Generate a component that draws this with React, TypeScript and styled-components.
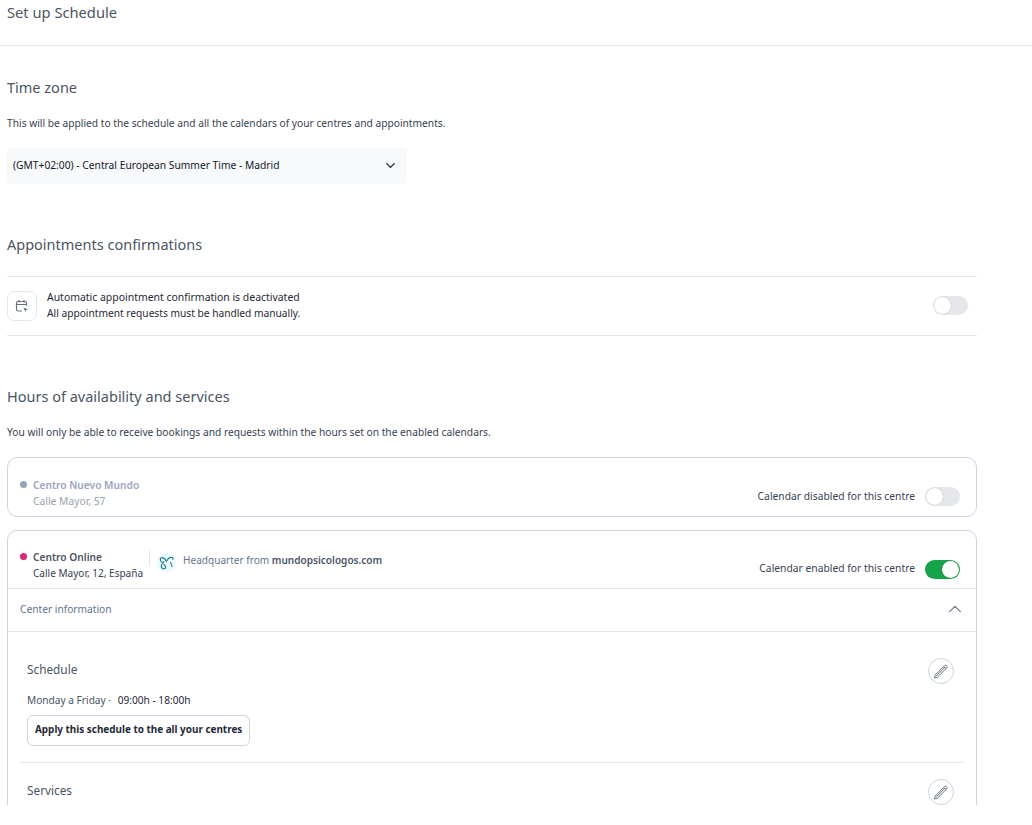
import React from 'react';
import styled, { createGlobalStyle } from 'styled-components';
import { ChevronDown, ChevronUp } from 'lucide-react';

const GlobalStyle = createGlobalStyle`
  html, body {
    margin: 0;
    padding: 0;
    background: #fff;
    font-family: "Noto Sans", "Open Sans", sans-serif;
    color: #1f2937;
  }
`;

const Page = styled.div`
  width: 1032px;
  height: 805px;
  overflow: hidden;
`;

const Header = styled.header`
  height: 46px;
  padding: 3px 7px 0;
  box-sizing: border-box;
  border-bottom: 1px solid #e5e7ef;
  font-size: 14.7px;
  line-height: 18px;
  color: #4b5563;
`;

const Content = styled.main`
  width: 970px;
  padding: 31px 0 0 7px;
`;

const Section = styled.section`
  margin-bottom: 50px;
`;

const SectionTitle = styled.h2`
  margin: 0;
  font-size: 14.5px;
  font-weight: 400;
  line-height: 20px;
  color: #4b5563;
`;

const Hint = styled.p`
  margin: 19px 0 0;
  font-size: 10.22px;
  line-height: 14px;
  color: #374151;
`;

const Select = styled.div`
  margin-top: 18px;
  width: 400px;
  height: 36px;
  padding: 0 9px 2px 6px;
  box-sizing: border-box;
  display: flex;
  align-items: center;
  justify-content: space-between;
  background: #f8f9fb;
  border-radius: 2px;
  font-size: 10.25px;
  color: #111827;
`;

const ConfirmRow = styled.div`
  margin-top: 22px;
  height: 60px;
  padding: 0 9px 2px 0;
  box-sizing: border-box;
  display: flex;
  align-items: center;
  border-top: 1px solid #e5e7eb;
  border-bottom: 1px solid #e5e7eb;
`;

const IconBox = styled.div`
  width: 30px;
  height: 30px;
  margin: 2px 10px 0 0;
  box-sizing: border-box;
  display: flex;
  align-items: center;
  justify-content: center;
  border: 1px solid #e5e7ef;
  border-radius: 7px;
`;

const ConfirmText = styled.div`
  flex: 1;
  line-height: 16px;
  color: #1f2937;
`;

const ConfirmTitle = styled.div`
  font-size: 10.45px;
`;

const ConfirmBody = styled.div`
  font-size: 10.2px;
`;

const Toggle = styled.span<{ $on?: boolean }>`
  position: relative;
  display: block;
  flex: none;
  width: 35px;
  height: 19px;
  border-radius: 10px;
  background: ${(p) => (p.$on ? '#16a34a' : '#e5e7eb')};

  &::after {
    content: '';
    position: absolute;
    top: 1px;
    left: ${(p) => (p.$on ? '17px' : '1px')};
    width: 17px;
    height: 17px;
    border-radius: 50%;
    background: #fff;
    box-shadow: 0 0 1px rgba(0, 0, 0, 0.3);
  }
`;

const Card = styled.div`
  margin-top: 13px;
  border: 1px solid #cbd5e1;
  border-radius: 10px;
`;

const CardList = styled.div`
  margin-top: 18px;
`;

const CardHead = styled.div<{ $open?: boolean }>`
  height: 58px;
  padding: ${(p) => (p.$open ? '18px' : '19px')} 16px 0 12px;
  box-sizing: border-box;
  display: flex;
  ${(p) => (p.$open ? 'border-bottom: 1px solid #e2e8f0;' : '')}
`;

const Dot = styled.span<{ $color: string }>`
  flex: none;
  width: 7px;
  height: 7px;
  margin: 4px 6px 0 0;
  border-radius: 50%;
  background: ${(p) => p.$color};
`;

const CentreName = styled.div<{ $muted?: boolean }>`
  font-size: 10.2px;
  font-weight: 600;
  line-height: 16px;
  color: ${(p) => (p.$muted ? '#9ca3bf' : '#4b5563')};
`;

const CentreAddress = styled.div<{ $muted?: boolean }>`
  font-size: ${(p) => (p.$muted ? '10.3px' : '10.05px')};
  line-height: 16px;
  color: ${(p) => (p.$muted ? '#9ca3af' : '#374151')};
`;

const Separator = styled.span`
  flex: none;
  width: 1px;
  height: 16px;
  margin: 1px 7px 0 6px;
  background: #e2e8f0;
`;

const Headquarter = styled.div`
  display: flex;
  align-items: flex-start;
  margin-top: 4px;
  font-size: 10.05px;
  line-height: 14px;
  color: #64748b;

  b {
    font-weight: 600;
    color: #4b5563;
  }
`;

const Butterfly = styled.span`
  display: flex;
  align-items: center;
  justify-content: center;
  width: 19px;
  height: 19px;
  margin-right: 7px;
  border-radius: 50%;
  background: #e9f9fc;
`;

const CalendarStatus = styled.div<{ $bottom: number }>`
  margin-left: auto;
  margin-bottom: ${(p) => p.$bottom}px;
  align-self: flex-end;
  display: flex;
  align-items: center;
  gap: 10px;
  font-size: 10.3px;
  color: #374151;
`;

const StatusLabel = styled.span<{ $lift: number }>`
  padding-bottom: ${(p) => p.$lift}px;
`;

const InfoBar = styled.div`
  height: 43px;
  padding: 0 10px 2px 12px;
  box-sizing: border-box;
  display: flex;
  align-items: center;
  justify-content: space-between;
  border-bottom: 1px solid #e2e8f0;
  font-size: 10.2px;
  color: #64748b;
`;

const Block = styled.div<{ $last?: boolean }>`
  margin: 0 13px 0 12px;
  padding: ${(p) => (p.$last ? '16px' : '26px')} 9px 16px 7px;
  ${(p) => (p.$last ? '' : 'border-bottom: 1px solid #e2e8f0;')}
`;

const BlockHead = styled.div`
  display: flex;
  align-items: center;
  justify-content: space-between;
  font-size: 11.8px;
  color: #4b5563;
`;

const BlockTitle = styled.span`
  padding-bottom: 4px;
`;

const EditButton = styled.span`
  display: flex;
  align-items: center;
  justify-content: center;
  width: 26px;
  height: 26px;
  box-sizing: border-box;
  border: 1px solid #cbd5e1;
  border-radius: 50%;
`;

const Hours = styled.div`
  margin-top: 8px;
  font-size: 10.15px;
  line-height: 16px;
  color: #4b5563;

  span {
    margin-left: 4px;
    color: #1f2937;
  }
`;

const ApplyButton = styled.div`
  display: block;
  width: fit-content;
  margin-top: 7px;
  padding: 0 7px 0 7px;
  height: 31px;
  line-height: 26px;
  box-sizing: border-box;
  border: 1px solid #cbd5e1;
  border-radius: 6px;
  font-size: 9.92px;
  font-weight: 700;
  color: #1f2937;
`;

const CalendarClick = () => (
  <svg width="16" height="16" viewBox="0 0 16 16" fill="none" stroke="#6b7280" strokeWidth="1.2">
    <path d="M8 13H4a1.5 1.5 0 0 1-1.5-1.5V5A1.5 1.5 0 0 1 4 3.5h7A1.5 1.5 0 0 1 12.5 5v2.5" />
    <path d="M2.5 6.5h10M5 2v2.5M10 2v2.5" />
    <path d="M9.5 9.5l4.5 1.8-2 .7-.7 2z" fill="#6b7280" stroke="none" />
    <path d="M14.5 8.5l.6-.6M12.5 8v-.8" strokeWidth="0.8" />
  </svg>
);

const ButterflyLogo = () => (
  <svg width="16" height="14" viewBox="0 0 16 14" fill="none" stroke="#2a7d8e" strokeWidth="1.2">
    <path d="M7.5 5.5C6 2.8 3.8 1.2 2.2 1.8 0.8 2.4 1.2 4.4 2.4 5.8L6 9.6c.9 1 .8 2.6-.4 3-1.6.5-3.4-.6-3.4-2.8 0-1.6 1.4-3.2 3-4.4" />
    <path d="M7.5 5.5c1-2.2 3-4.1 5-4.1 1.3 0 1.7 1 1.2 2.4M11.3 6c1 1.5 1.6 3 1.7 5" />
  </svg>
);

const Pencil = () => (
  <svg width="16" height="16" viewBox="0 0 16 16" fill="none" stroke="#5b6472" strokeWidth="0.9">
    <path d="M1.5 15l.7-3L11.8 2.4a1 1 0 0 1 1.4 0l.8.8a1 1 0 0 1 0 1.4L4.4 14.2z" />
    <path d="M3.3 12.9l8.9-8.9M10.8 3.4l2.3 2.3" />
  </svg>
);

export default function App() {
  return (
    <Page>
      <GlobalStyle />
      <Header>Set up Schedule</Header>
      <Content>
        <Section>
          <SectionTitle>Time zone</SectionTitle>
          <Hint>This will be applied to the schedule and all the calendars of your centres and appointments.</Hint>
          <Select>
            (GMT+02:00) - Central European Summer Time - Madrid
            <ChevronDown size={15} strokeWidth={2.2} color="#1f2937" />
          </Select>
        </Section>
        <Section>
          <SectionTitle>Appointments confirmations</SectionTitle>
          <ConfirmRow>
            <IconBox>
              <CalendarClick />
            </IconBox>
            <ConfirmText>
              <ConfirmTitle>Automatic appointment confirmation is deactivated</ConfirmTitle>
              <ConfirmBody>All appointment requests must be handled manually.</ConfirmBody>
            </ConfirmText>
            <Toggle />
          </ConfirmRow>
        </Section>
        <section>
          <SectionTitle>Hours of availability and services</SectionTitle>
          <Hint>You will only be able to receive bookings and requests within the hours set on the enabled calendars.</Hint>
          <CardList>
            <Card>
              <CardHead>
                <Dot $color="#94a3b8" />
                <div>
                  <CentreName $muted>Centro Nuevo Mundo</CentreName>
                  <CentreAddress $muted>Calle Mayor, 57</CentreAddress>
                </div>
                <CalendarStatus $bottom={10}>
                  <StatusLabel $lift={2}>Calendar disabled for this centre</StatusLabel>
                  <Toggle />
                </CalendarStatus>
              </CardHead>
            </Card>
            <Card>
              <CardHead $open>
                <Dot $color="#db2777" />
                <div>
                  <CentreName>Centro Online</CentreName>
                  <CentreAddress>Calle Mayor, 12, España</CentreAddress>
                </div>
                <Separator />
                <Headquarter>
                  <Butterfly>
                    <ButterflyLogo />
                  </Butterfly>
                  <span>
                    Headquarter from <b>mundopsicologos.com</b>
                  </span>
                </Headquarter>
                <CalendarStatus $bottom={9}>
                  <StatusLabel $lift={4}>Calendar enabled for this centre</StatusLabel>
                  <Toggle $on />
                </CalendarStatus>
              </CardHead>
              <InfoBar>
                Center information
                <ChevronUp size={22} strokeWidth={1.2} color="#7b8594" />
              </InfoBar>
              <Block>
                <BlockHead>
                  <BlockTitle>Schedule</BlockTitle>
                  <EditButton>
                    <Pencil />
                  </EditButton>
                </BlockHead>
                <Hours>
                  Monday a Friday · <span>09:00h - 18:00h</span>
                </Hours>
                <ApplyButton>Apply this schedule to the all your centres</ApplyButton>
              </Block>
              <Block $last>
                <BlockHead>
                  <BlockTitle>Services</BlockTitle>
                  <EditButton>
                    <Pencil />
                  </EditButton>
                </BlockHead>
              </Block>
            </Card>
          </CardList>
        </section>
      </Content>
    </Page>
  );
}
